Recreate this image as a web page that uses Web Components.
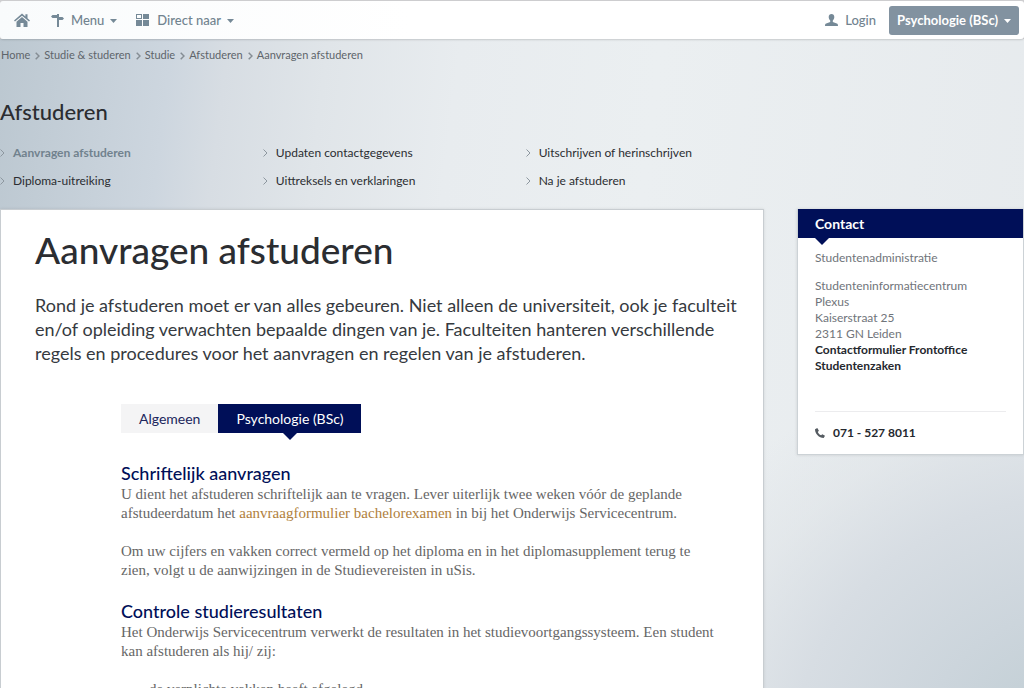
<!DOCTYPE html>
<html lang="nl">
<head>
<meta charset="utf-8">
<title>Aanvragen afstuderen</title>
<style>
html { min-height: 100%; overflow-x: hidden;
  background:
    radial-gradient(ellipse 46% 60% at 106% 108%, #bccbd1 0%, #ccd5dc 35%, #d7dde3 62%, rgba(221,226,230,.5) 82%, rgba(232,236,239,0) 100%),
    linear-gradient(97deg, #bbc7d0 0%, #cdd6df 16%, #d7dde3 21%, #e0e5e9 30%, #e8ecef 42%, #ebeff1 60%, #e6eaed 100%); }
body { margin: 0; font-family: Lato, "Liberation Sans", sans-serif; color: #2b2d31; }
</style>
</head>
<body>
<study-page></study-page>
<script>
const define = (name, html) => customElements.define(name, class extends HTMLElement {
  constructor() {
    super();
    this.attachShadow({ mode: 'open' }).innerHTML = html;
  }
});

define('top-bar', `
<style>
:host { display: block; padding-top: 1px; background: #cfcfd1; }
nav { display: flex; align-items: center; height: 38px; padding: 0 5px 0 14px; box-sizing: border-box;
  background: linear-gradient(90deg, #f9fbfc, #fff 40%); border-radius: 3px; box-shadow: 0 1px 2px rgba(0,0,0,.15); }
a, button { display: flex; align-items: center; border: 0; padding: 0; background: none; cursor: pointer;
  font: 500 13px/20px Lato, "Liberation Sans", sans-serif; color: #71838f; text-decoration: none; }
svg { display: block; fill: #758997; }
.menu { margin-left: 21px; }
.direct { margin-left: 19px; }
.login { margin-left: auto; margin-right: 13px; }
.menu svg:first-child, .direct svg:first-child, .login svg { margin-right: 7px; }
.caret { margin: 2px 0 0 6px; }
.study { height: 29px; padding: 0 8px; border-radius: 3px; background: #8292a0; color: #fff; font-weight: 700; }
.study .caret { fill: #fff; }
</style>
<nav aria-label="Hoofdmenu">
  <a href="#" aria-label="Home"><svg width="16" height="14" viewBox="0 0 16 14"><path d="M8 .6 0 7.400l1 1.200L8 2.700l7 5.900 1-1.200-2.500-2.100V1.200h-2.100v2.300z"/><path d="M8 4.100 2.500 8.700V14h4v-4h3v4h4V8.700z"/></svg></a>
  <button class="menu"><svg width="13" height="13" viewBox="0 0 13 13"><path d="M6 0h2v3h3.500L13 4.500 11.500 6H8v7H6V4H1.500L0 2.500 1.500 1H6z"/></svg>Menu<svg class="caret" width="7" height="4" viewBox="0 0 7 4"><path d="M0 0h7L3.500 4z"/></svg></button>
  <button class="direct"><svg width="14" height="12" viewBox="0 0 14 12"><path fill-rule="evenodd" d="M0 0h6v5H0zM1 1v3h4V1zM7 0h6v5H7zM0 6h6v6H0zM7 6h6v6H7z"/></svg>Direct naar<svg class="caret" width="7" height="4" viewBox="0 0 7 4"><path d="M0 0h7L3.500 4z"/></svg></button>
  <a class="login" href="#"><svg width="13" height="12" viewBox="0 0 13 12"><path d="M6.500 0C4.800 0 3.700 1.200 3.700 3c0 1.500.6 2.700 1.500 3.500V8L1.200 9.500C.3 9.900 0 10.500 0 12h13c0-1.500-.3-2.100-1.200-2.500L7.800 8V6.500C8.700 5.700 9.300 4.500 9.300 3c0-1.800-1.100-3-2.800-3z"/></svg>Login</a>
  <button class="study">Psychologie (BSc)<svg class="caret" width="7" height="4" viewBox="0 0 7 4"><path d="M0 0h7L3.500 4z"/></svg></button>
</nav>`);

const crumbs = ['Home', 'Studie &amp; studeren', 'Studie', 'Afstuderen', 'Aanvragen afstuderen'];
define('crumb-list', `
<style>
:host { display: block; }
ol { display: flex; margin: 0; padding: 8px 0 0 1px; list-style: none; }
li { display: flex; align-items: center; font-size: 11px; line-height: 16px; white-space: nowrap; }
a { color: #5e656b; text-decoration: none; }
svg { margin: 1px 4px 0 5px; fill: none; stroke: #858d94; stroke-width: 1.5; }
</style>
<nav aria-label="Kruimelpad"><ol>${crumbs.map((t, i) => `<li>${i ? '<svg width="5" height="8" viewBox="0 0 5 8"><path d="M.7.700 4 4 .7 7.300"/></svg>' : ''}<a href="#">${t}</a></li>`).join('')}</ol></nav>`);

const links = ['Aanvragen afstuderen', 'Updaten contactgegevens', 'Uitschrijven of herinschrijven',
  'Diploma-uitreiking', 'Uittreksels en verklaringen', 'Na je afstuderen'];
define('section-nav', `
<style>
:host { display: block; padding-top: 35px; }
h2 { margin: 0; font-size: 22px; line-height: 28px; font-weight: 500; }
ul { display: grid; grid-template-columns: repeat(3, 1fr); width: 77%; margin: 13px 0 0; padding: 0; list-style: none; }
a { display: flex; align-items: center; font-size: 12px; line-height: 28px; color: inherit; text-decoration: none; }
a[aria-current] { color: #71828e; font-weight: 700; }
svg { margin-right: 8px; fill: none; stroke: #8d979f; }
</style>
<h2>Afstuderen</h2>
<nav aria-label="Afstuderen"><ul>${links.map((t, i) => `<li><a href="#"${i ? '' : ' aria-current="page"'}><svg width="5" height="8" viewBox="0 0 5 8"><path d="M.5.500 4 4 .5 7.500"/></svg>${t}</a></li>`).join('')}</ul></nav>`);

define('tab-strip', `
<style>
:host { display: block; }
div { display: flex; }
button { position: relative; height: 29px; padding: 0 18px; border: 0; background: #f4f4f5; color: #20265c;
  font: 14px/29px Lato, "Liberation Sans", sans-serif; cursor: pointer; }
[aria-selected=true] { background: #000f58; color: #fff; }
[aria-selected=true]::after { content: ""; position: absolute; top: 100%; left: 50%; margin-left: -7px;
  border: 7px solid transparent; border-top-color: #000f58; border-bottom: 0; }
</style>
<div role="tablist"><button role="tab" aria-selected="false">Algemeen</button><button role="tab" aria-selected="true">Psychologie (BSc)</button></div>`);

define('text-section', `
<style>
:host { display: block; color: #666; font: 15px/19px "Liberation Serif", serif; }
h3 { margin: 0; color: #000f58; font: 500 18px/24px Lato, "Liberation Sans", sans-serif; }
::slotted(p) { margin: 0 0 19px !important; }
::slotted(ul) { margin: 0 !important; padding-left: 28px !important; }
</style>
<h3><slot name="title"></slot></h3><slot></slot>`);

define('article-card', `
<style>
:host { display: block; box-sizing: border-box; padding: 18px 20px 0 34px; border: 1px solid #c8cdd1; background: #fff; box-shadow: 0 0 3px rgba(0,0,0,.1); }
h1 { margin: 0; font-size: 37px; line-height: 44px; font-weight: 500; }
.lead { margin: 21px 0 0; font-size: 18px; line-height: 24px; color: #363a40; }
.body { margin: 39px 0 0; padding-left: 86px; }
tab-strip { margin-bottom: 28px; }
a { color: #b0803c; text-decoration: none; }
</style>
<h1>Aanvragen afstuderen</h1>
<p class="lead">Rond je afstuderen moet er van alles gebeuren. Niet alleen de universiteit, ook je faculteit<br>en/of opleiding verwachten bepaalde dingen van je. Faculteiten hanteren verschillende<br>regels en procedures voor het aanvragen en regelen van je afstuderen.</p>
<div class="body">
  <tab-strip></tab-strip>
  <text-section><span slot="title">Schriftelijk aanvragen</span>
    <p>U dient het afstuderen schriftelijk aan te vragen. Lever uiterlijk twee weken vóór de geplande<br>afstudeerdatum het <a href="#">aanvraagformulier bachelorexamen</a> in bij het Onderwijs Servicecentrum.</p>
    <p>Om uw cijfers en vakken correct vermeld op het diploma en in het diplomasupplement terug te<br>zien, volgt u de aanwijzingen in de Studievereisten in uSis.</p>
  </text-section>
  <text-section><span slot="title">Controle studieresultaten</span>
    <p>Het Onderwijs Servicecentrum verwerkt de resultaten in het studievoortgangssysteem. Een student<br>kan afstuderen als hij/ zij:</p>
    <ul><li>de verplichte vakken heeft afgelegd</li></ul>
  </text-section>
</div>`);

define('contact-card', `
<style>
:host { display: block; border: 1px solid #ccd2d6; border-top: 0; background: #fff; box-shadow: 0 0 3px rgba(0,0,0,.12); box-sizing: border-box; color: #70747a; font-size: 12px; line-height: 16px; }
h2 { position: relative; margin: 0; padding-left: 17px; background: #000f58; color: #fff; font-size: 14px; line-height: 29px; font-weight: 700; }
h2::after { content: ""; position: absolute; top: 100%; left: 17px; border: 7px solid transparent; border-top-color: #000f58; border-bottom: 0; }
.in { padding: 12px 17px 13px; }
p { margin: 0 0 12px; }
address { font-style: normal; margin-bottom: 37px; }
a { color: #25282e; text-decoration: none; font-weight: 700; }
.tel { display: flex; align-items: center; padding-top: 13px; border-top: 1px solid #ececee; }
.tel svg { margin-right: 8px; fill: #555b61; }
</style>
<h2>Contact</h2>
<div class="in"><p>Studentenadministratie</p>
<address>Studenteninformatiecentrum<br>Plexus<br>Kaiserstraat 25<br>2311 GN Leiden<br><a href="#">Contactformulier Frontoffice<br>Studentenzaken</a></address>
<a class="tel" href="tel:0715278011"><svg width="10" height="10" viewBox="0 0 10 10"><path d="M2.300 0 0 1.300C0 6 4 10 8.700 10L10 7.800 7.300 6.200 6.100 7.300C4.500 6.600 3.400 5.500 2.800 4L3.900 2.800z"/></svg>071 - 527 8011</a></div>`);

define('study-page', `
<style>
:host { display: block; }
main { display: grid; grid-template-columns: minmax(0, 764fr) minmax(0, 227fr); column-gap: 33px; align-items: start; margin-top: 14px; }
</style>
<top-bar></top-bar><crumb-list></crumb-list><section-nav></section-nav>
<main><article-card></article-card><contact-card></contact-card></main>`);
</script>
</body>
</html>
